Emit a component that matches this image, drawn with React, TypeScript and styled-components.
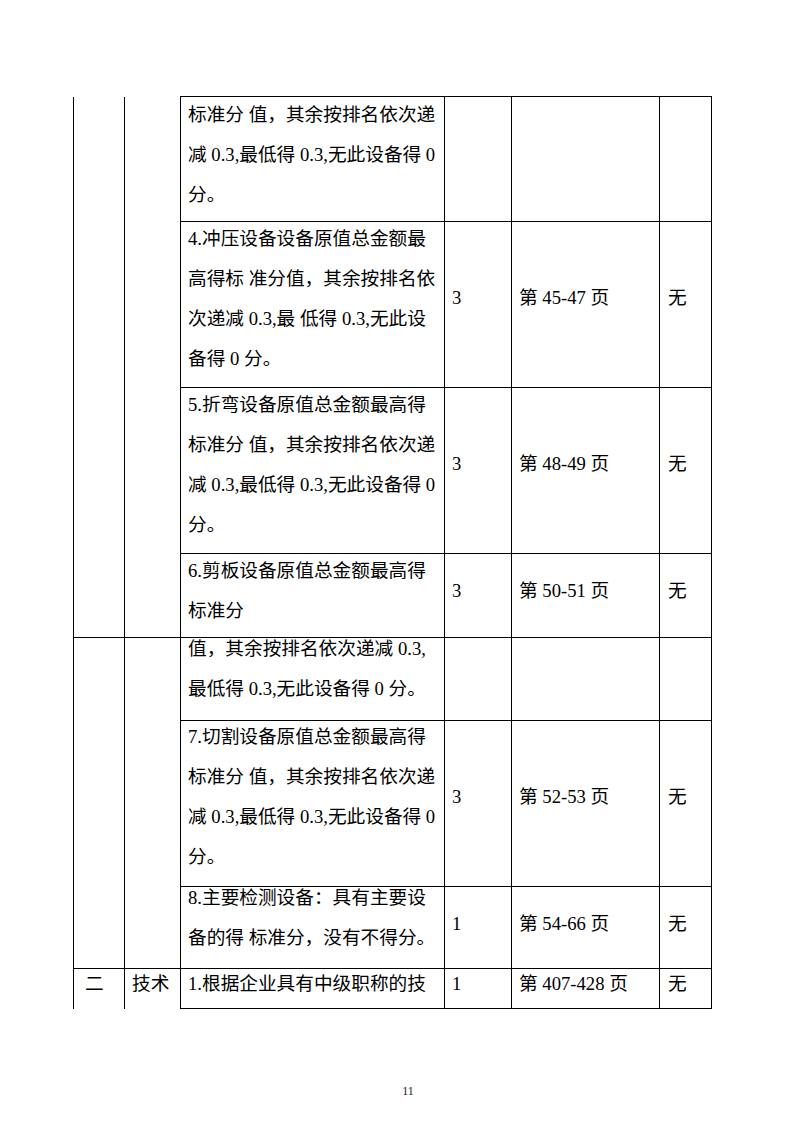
import React from 'react'
import styled, { createGlobalStyle } from 'styled-components'

const GlobalStyle = createGlobalStyle`
  html, body {
    margin: 0;
    padding: 0;
    background: #fff;
  }
  body {
    font-family: 'Liberation Serif', 'Noto Sans CJK SC', serif;
    color: #000;
  }
`

const Page = styled.div`
  width: 793px;
  height: 1122px;
  box-sizing: border-box;
  padding-top: 96px;
  display: flex;
  flex-direction: column;
`

const Sheet = styled.table`
  margin-left: 73px;
  border-collapse: collapse;
  table-layout: fixed;
  width: 639px;
  font-size: 18.67px;
  line-height: 40px;
`

const Row = styled.tr<{ $h: number }>`
  height: ${(p) => p.$h}px;
`

const Cell = styled.td<{ $noTop?: boolean; $noBottom?: boolean; $padLeft?: number }>`
  border: 1px solid #000;
  border-top-style: ${(p) => (p.$noTop ? 'none' : 'solid')};
  border-bottom-style: ${(p) => (p.$noBottom ? 'none' : 'solid')};
  padding: 0 4px 0 ${(p) => p.$padLeft ?? 7}px;
  vertical-align: middle;
  white-space: nowrap;
  overflow: visible;
`

// lift = how far the text sits above the cell's middle (Word puts the spare leading below)
const Text = styled.div<{ $lift: number }>`
  margin-top: ${(p) => -2 * p.$lift}px;
`

const Footer = styled.div`
  margin-top: auto;
  padding: 0 0 24px 23px;
  text-align: center;
  font-size: 12px;
  line-height: 14px;
  color: #222;
`

type Item = {
  h: number
  lines: string[]
  score?: string
  pages?: string
  note?: string
  lift: number
  numLift?: number
}

const Lines: React.FC<{ lines: string[] }> = ({ lines }) => (
  <>
    {lines.map((l, i) => (
      <React.Fragment key={i}>
        {i > 0 && <br />}
        {l}
      </React.Fragment>
    ))}
  </>
)

const groupOne: Item[] = [
  {
    h: 125,
    lines: ['标准分 值，其余按排名依次递', '减 0.3,最低得 0.3,无此设备得 0', '分。'],
    lift: 4,
  },
  {
    h: 166,
    lines: ['4.冲压设备设备原值总金额最', '高得标 准分值，其余按排名依', '次递减 0.3,最 低得 0.3,无此设', '备得 0 分。'],
    score: '3',
    pages: '第 45-47 页',
    note: '无',
    lift: 6,
    numLift: 7,
  },
  {
    h: 166,
    lines: ['5.折弯设备原值总金额最高得', '标准分 值，其余按排名依次递', '减 0.3,最低得 0.3,无此设备得 0', '分。'],
    score: '3',
    pages: '第 48-49 页',
    note: '无',
    lift: 6,
    numLift: 7,
  },
  {
    h: 84,
    lines: ['6.剪板设备原值总金额最高得', '标准分'],
    score: '3',
    pages: '第 50-51 页',
    note: '无',
    lift: 5,
  },
]

const groupTwo: Item[] = [
  {
    h: 83,
    lines: ['值，其余按排名依次递减 0.3,', '最低得 0.3,无此设备得 0 分。'],
    lift: 10,
  },
  {
    h: 166,
    lines: ['7.切割设备原值总金额最高得', '标准分 值，其余按排名依次递', '减 0.3,最低得 0.3,无此设备得 0', '分。'],
    score: '3',
    pages: '第 52-53 页',
    note: '无',
    lift: 7,
    numLift: 7,
  },
  {
    h: 82,
    lines: ['8.主要检测设备：具有主要设', '备的得 标准分，没有不得分。'],
    score: '1',
    pages: '第 54-66 页',
    note: '无',
    lift: 10,
    numLift: 4,
  },
]

const ItemCells: React.FC<{ item: Item }> = ({ item }) => {
  const n = item.numLift ?? 5
  return (
    <>
      <Cell>
        <Text $lift={item.lift}>
          <Lines lines={item.lines} />
        </Text>
      </Cell>
      <Cell>
        <Text $lift={n}>{item.score}</Text>
      </Cell>
      <Cell>
        <Text $lift={n}>{item.pages}</Text>
      </Cell>
      <Cell $padLeft={8}>
        <Text $lift={n}>{item.note}</Text>
      </Cell>
    </>
  )
}

export default function App() {
  return (
    <Page>
      <GlobalStyle />
      <Sheet>
        <colgroup>
          <col style={{ width: 51 }} />
          <col style={{ width: 56 }} />
          <col style={{ width: 264 }} />
          <col style={{ width: 67 }} />
          <col style={{ width: 148 }} />
          <col style={{ width: 52 }} />
        </colgroup>
        <tbody>
          {groupOne.map((item, i) => (
            <Row key={`a${i}`} $h={item.h}>
              {i === 0 && (
                <>
                  <Cell rowSpan={groupOne.length} $noTop />
                  <Cell rowSpan={groupOne.length} $noTop />
                </>
              )}
              <ItemCells item={item} />
            </Row>
          ))}
          {groupTwo.map((item, i) => (
            <Row key={`b${i}`} $h={item.h}>
              {i === 0 && (
                <>
                  <Cell rowSpan={groupTwo.length} />
                  <Cell rowSpan={groupTwo.length} />
                </>
              )}
              <ItemCells item={item} />
            </Row>
          ))}
          <Row $h={40}>
            <Cell $noBottom $padLeft={11}>
              <Text $lift={5}>二</Text>
            </Cell>
            <Cell $noBottom>
              <Text $lift={5}>技术</Text>
            </Cell>
            <ItemCells
              item={{
                h: 40,
                lines: ['1.根据企业具有中级职称的技'],
                score: '1',
                pages: '第 407-428 页',
                note: '无',
                lift: 5,
              }}
            />
          </Row>
        </tbody>
      </Sheet>
      <Footer>11</Footer>
    </Page>
  )
}
